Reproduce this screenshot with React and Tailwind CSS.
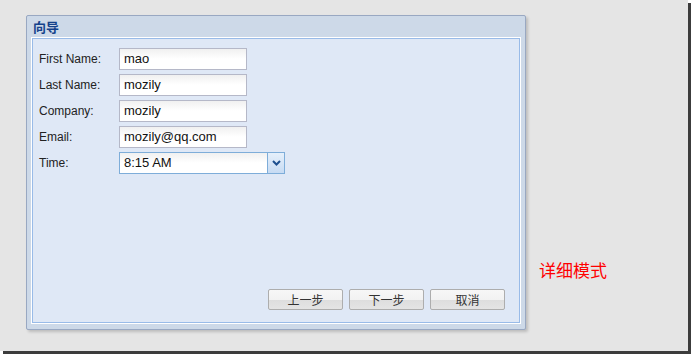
const fields = [
  { label: "First Name:", value: "mao" },
  { label: "Last Name:", value: "mozily" },
  { label: "Company:", value: "mozily" },
  { label: "Email:", value: "mozily@qq.com" },
]

function Field({ label, value }) {
  return (
    <div className="flex items-center h-[22px] mb-[4px]">
      <span className="w-[80px] text-[12px] text-[#222]">{label}</span>
      <div className="w-[128px] h-[22px] border border-[#b5b8c8] bg-gradient-to-b from-[#f0f0f0] via-white to-white px-[4px] flex items-center text-[13px] text-[#111]">
        {value}
      </div>
    </div>
  )
}

function Btn({ children }) {
  return (
    <button className="w-[75px] h-[21px] rounded-[2px] border border-[#adadad] bg-[linear-gradient(#f7f7f7_0%,#f2f2f2_50%,#dddddd_50%,#e4e4e4_100%)] text-[12px] text-[#333] flex items-center justify-center font-['Noto_Sans_CJK_SC',sans-serif]">
      {children}
    </button>
  )
}

export default function App() {
  return (
    <div className="w-[691px] h-[355px] bg-white font-['Liberation_Sans','Noto_Sans_CJK_SC',sans-serif]">
      <div className="w-[688px] h-[351px] bg-[#e5e5e5] shadow-[3px_3px_0_#3c3c3c] flex items-start pl-[26px] pt-[15px]">
        <div className="w-[500px] h-[315px] border border-[#99a8c2] bg-[#cdd9e8] rounded-[2px] shadow-[2px_2px_3px_rgba(0,0,0,0.18)] flex flex-col px-[5px] pb-[6px]">
          <div className="h-[22px] flex items-center pl-[1px] text-[13px] font-bold text-[#15428b] font-['Noto_Sans_CJK_SC',sans-serif]">
            向导
          </div>
          <div className="flex-1 border border-[#99bbe8] bg-[#dfe8f6] shadow-[0_0_0_1px_#ffffff] flex flex-col pl-[6px] pr-[14px] pt-[9px] pb-[12px]">
            {fields.map((f) => (
              <Field key={f.label} {...f} />
            ))}
            <div className="flex items-center h-[22px]">
              <span className="w-[80px] text-[12px] text-[#222]">Time:</span>
              <div className="flex h-[22px]">
                <div className="w-[148px] h-[22px] border border-[#7eadd9] border-r-0 bg-gradient-to-b from-[#f0f0f0] via-white to-white px-[4px] flex items-center text-[13px] text-[#111]">
                  8:15 AM
                </div>
                <div className="w-[18px] h-[22px] border border-[#7eadd9] bg-gradient-to-b from-[#e6f0fb] to-[#c7dbf3] flex items-center justify-center">
                  <svg width="9" height="6" viewBox="0 0 9 6">
                    <path d="M1 1 L4.5 4.5 L8 1" fill="none" stroke="#1d4f8f" strokeWidth="2" />
                  </svg>
                </div>
              </div>
            </div>
            <div className="flex-1" />
            <div className="flex justify-end gap-[6px]">
              <Btn>上一步</Btn>
              <Btn>下一步</Btn>
              <Btn>取消</Btn>
            </div>
          </div>
        </div>
        <div className="ml-[13px] mt-[244px] text-[17px] text-[#ff0000] font-['Noto_Sans_CJK_SC',sans-serif] leading-[22px]">
          详细模式
        </div>
      </div>
    </div>
  )
}
